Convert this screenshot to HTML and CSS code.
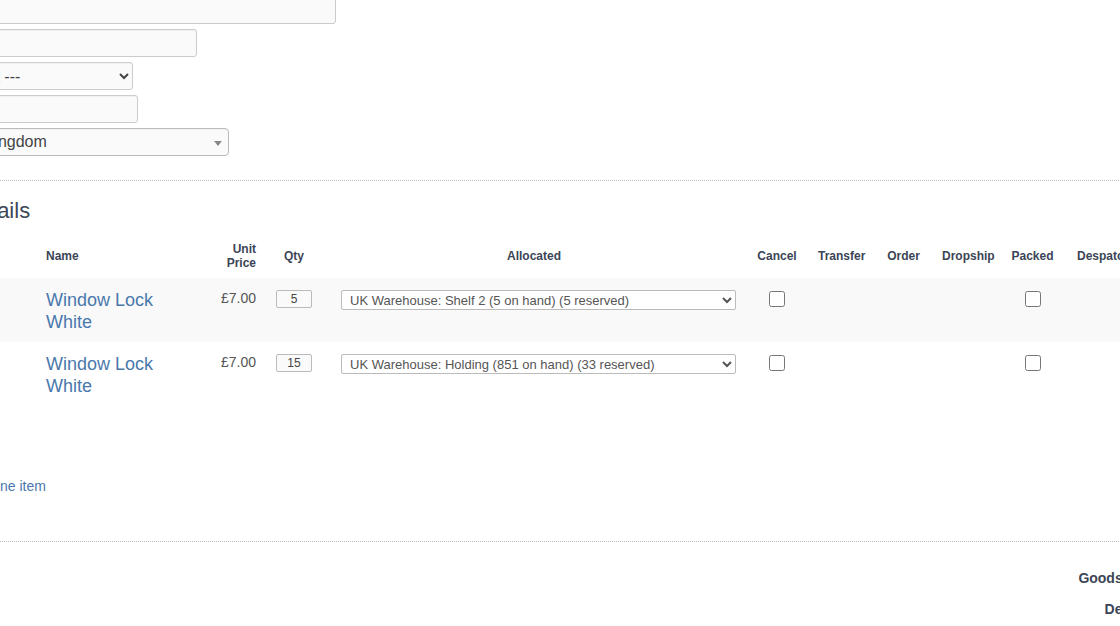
FILE: index.html
```html
<!DOCTYPE html>
<html lang="en">
<head>
  <meta charset="UTF-8">
  <title>Order</title>
  <link rel="stylesheet" href="styles.css">
</head>
<body>

  <div class="page">

    <div class="address-form">
      <input type="text" class="field field-line1">
      <input type="text" class="field field-line2">
      <select class="field field-county">
        <option>--- Select ---</option>
      </select>
      <input type="text" class="field field-postcode">
      <div class="field field-country">
        <span>United Kingdom</span>
        <b class="caret"></b>
      </div>
    </div>

    <hr class="dotted">

    <h2 class="section-title">Item Details</h2>

    <table class="items">
      <colgroup>
        <col style="width:119px">
        <col style="width:167px">
        <col style="width:59px">
        <col style="width:60px">
        <col style="width:420px">
        <col style="width:66px">
        <col style="width:63px">
        <col style="width:61px">
        <col style="width:65px">
        <col style="width:67px">
        <col style="width:90px">
      </colgroup>
      <thead>
        <tr>
          <th></th>
          <th class="left">Name</th>
          <th class="right">Unit<br>Price</th>
          <th>Qty</th>
          <th>Allocated</th>
          <th>Cancel</th>
          <th>Transfer</th>
          <th>Order</th>
          <th>Dropship</th>
          <th>Packed</th>
          <th>Despatched</th>
        </tr>
      </thead>
      <tbody>
        <tr class="odd">
          <td></td>
          <td><a href="#" class="item-name">Window Lock White</a></td>
          <td class="price">£7.00</td>
          <td class="center"><input type="text" class="qty" value="5"></td>
          <td class="alloc">
            <select class="alloc-select">
              <option>UK Warehouse: Shelf 2 (5 on hand) (5 reserved)</option>
            </select>
          </td>
          <td class="center"><input type="checkbox" class="check"></td>
          <td></td>
          <td></td>
          <td></td>
          <td class="center"><input type="checkbox" class="check"></td>
          <td></td>
        </tr>
        <tr>
          <td></td>
          <td><a href="#" class="item-name">Window Lock White</a></td>
          <td class="price">£7.00</td>
          <td class="center"><input type="text" class="qty" value="15"></td>
          <td class="alloc">
            <select class="alloc-select">
              <option>UK Warehouse: Holding (851 on hand) (33 reserved)</option>
            </select>
          </td>
          <td class="center"><input type="checkbox" class="check"></td>
          <td></td>
          <td></td>
          <td></td>
          <td class="center"><input type="checkbox" class="check"></td>
          <td></td>
        </tr>
      </tbody>
    </table>

    <a href="#" class="add-line">Add line item</a>

    <hr class="dotted dotted-bottom">

    <div class="totals">
      <div class="total-row">Goods Total</div>
      <div class="total-row">Delivery</div>
    </div>

  </div>

</body>
</html>
```

FILE: styles.css
```css
* {
  box-sizing: border-box;
  margin: 0;
  padding: 0;
}

html, body {
  overflow: hidden;
  background-color: #fff;
}

body {
  font-family: "Liberation Sans", Arial, sans-serif;
  color: #444;
}

.page {
  width: 1300px;
  margin-left: -81px;
  margin-top: -4px;
}

/* address form */

.address-form {
  display: flex;
  flex-direction: column;
  align-items: flex-start;
  gap: 5px;
  margin-left: 9px;
}

.field {
  height: 28px;
  border: 1px solid #ccc;
  border-radius: 3px;
  background-color: #fafafa;
  box-shadow: inset 0 1px 1px rgba(0, 0, 0, 0.04);
  font-family: "Liberation Sans", Arial, sans-serif;
  font-size: 16px;
  color: #444;
}

.field-line1 { width: 408px; }
.field-line2 { width: 269px; }
.field-county { width: 205px; padding-left: 2px; }
.field-postcode { width: 210px; }

.field-country {
  width: 301px;
  display: flex;
  align-items: center;
  justify-content: space-between;
  padding: 0 6px 0 4px;
  border-color: #bbb;
  border-radius: 4px;
}

.caret {
  width: 0;
  height: 0;
  border-left: 4px solid transparent;
  border-right: 4px solid transparent;
  border-top: 5px solid #888;
  margin-top: 2px;
}

hr.dotted {
  border: none;
  border-top: 1px dotted #bbb;
  margin-top: 24px;
}

.section-title {
  font-size: 22px;
  font-weight: normal;
  color: #3c4858;
  line-height: 24px;
  margin-top: 18px;
  text-indent: -5px;
}

/* items table */

.items {
  table-layout: fixed;
  border-collapse: collapse;
  width: 1237px;
  margin-top: 17px;
}

.items th {
  font-size: 12px;
  line-height: 14px;
  font-weight: bold;
  color: #3b4556;
  text-align: center;
  vertical-align: middle;
  padding: 2px 8px 8px;
}

.items th.left { text-align: left; }
.items th.right { text-align: right; }

.items td {
  padding: 11px 8px 9px;
  vertical-align: top;
  font-size: 14px;
  line-height: 18px;
}

.items tr.odd td {
  background-color: #f9f9f9;
}

.items td.center { text-align: center; }

.item-name {
  display: block;
  font-size: 18px;
  line-height: 22px;
  color: #4a78ac;
  text-decoration: none;
  padding-right: 20px;
}

.price {
  text-align: right;
  color: #555;
  font-size: 15px;
}

.qty {
  width: 36px;
  height: 18px;
  margin-top: 1px;
  border: 1px solid #bbb;
  border-radius: 2px;
  background-color: #fafafa;
  text-align: center;
  font-family: "Liberation Sans", Arial, sans-serif;
  font-size: 12px;
  color: #444;
}

.items td.alloc {
  padding-left: 17px;
}

.alloc-select {
  width: 395px;
  height: 20px;
  margin-top: 1px;
  border: 1px solid #bbb;
  border-radius: 2px;
  background-color: #fff;
  font-family: "Liberation Sans", Arial, sans-serif;
  font-size: 13px;
  color: #555;
  padding-left: 4px;
}

.check {
  width: 16px;
  height: 16px;
  margin-top: 2px;
}

.add-line {
  display: inline-block;
  margin-left: 46px;
  margin-top: 70px;
  font-size: 14px;
  line-height: 20px;
  color: #4a78ac;
  text-decoration: none;
}

hr.dotted-bottom {
  margin-top: 45px;
}

/* totals */

.totals {
  width: 1240px;
  margin-top: 21px;
}

.total-row {
  text-align: right;
  font-size: 14px;
  font-weight: bold;
  color: #3b4556;
  line-height: 31px;
}
```
